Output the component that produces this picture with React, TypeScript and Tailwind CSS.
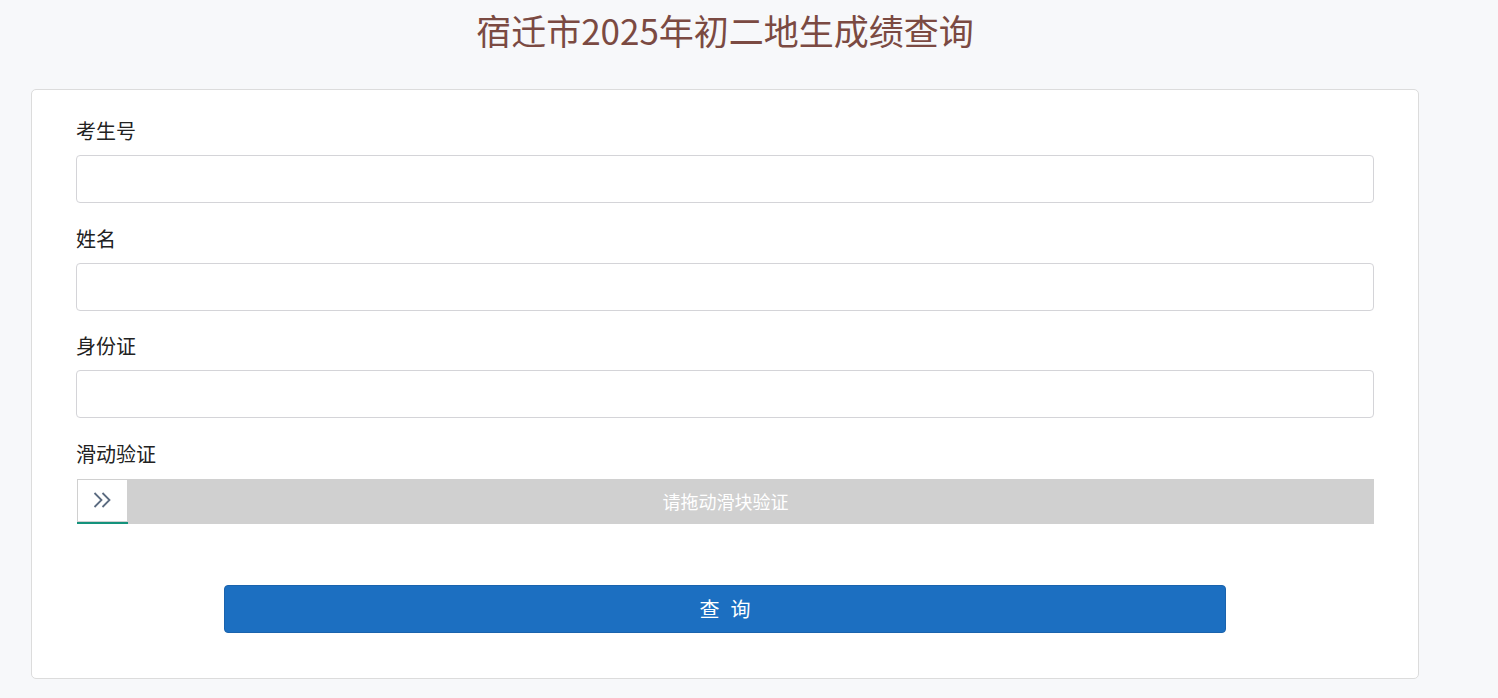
import { useState } from 'react'

const font = { fontFamily: '"Noto Sans CJK SC", "Noto Sans", sans-serif' }

function Field({ label }: { label: string }) {
  const [value, setValue] = useState('')
  return (
    <div className="flex flex-col">
      <label className="text-[20px] leading-[28px] text-[#222] mb-[10px]">{label}</label>
      <input
        value={value}
        onChange={(e) => setValue(e.target.value)}
        className="h-[48px] w-full rounded-[4px] border border-[#d4d4d8] bg-white px-3 text-base outline-none"
      />
    </div>
  )
}

export default function App() {
  return (
    <div className="min-h-screen bg-[#f7f8fa] pb-5" style={font}>
      <div className="ml-[31px] w-[1388px]">
        <h1 className="pt-[8px] pb-[38px] text-center text-[35px] leading-[43px] text-[#7b4a42]">
          宿迁市2025年初二地生成绩查询
        </h1>

        <div className="rounded-[5px] border border-[#dcdcdc] bg-white px-[44px] pt-[27px] pb-[45px]">
          <div className="flex flex-col gap-[21.5px]">
            <Field label="考生号" />
            <Field label="姓名" />
            <Field label="身份证" />

            <div className="flex flex-col">
              <label className="text-[20px] leading-[28px] text-[#222] mb-[11px]">滑动验证</label>
              <div className="relative ml-px h-[45px] bg-[#d0d0d0]">
                <div className="absolute left-px top-px flex h-[41px] w-[49px] items-center justify-center bg-white">
                  <svg width="19" height="16" viewBox="0 0 19 16" fill="none" stroke="#5b6b80" strokeWidth="1.8">
                    <path d="M1.5 1l7 7-7 7" />
                    <path d="M9.5 1l7 7-7 7" />
                  </svg>
                </div>
                <div className="absolute left-0 bottom-0 h-[2px] w-[51px] bg-[#14927c]" />
                <div className="flex h-full items-center justify-center text-[18px] text-white">请拖动滑块验证</div>
              </div>
            </div>
          </div>

          <div className="mt-[61px] flex justify-center">
            <button className="flex h-[48px] w-[1002px] items-center justify-center gap-[11px] rounded-[4px] border border-[#1a63ad] bg-[#1c6fc1] text-[20px] text-white">
              <span>查</span>
              <span>询</span>
            </button>
          </div>
        </div>
      </div>
    </div>
  )
}
